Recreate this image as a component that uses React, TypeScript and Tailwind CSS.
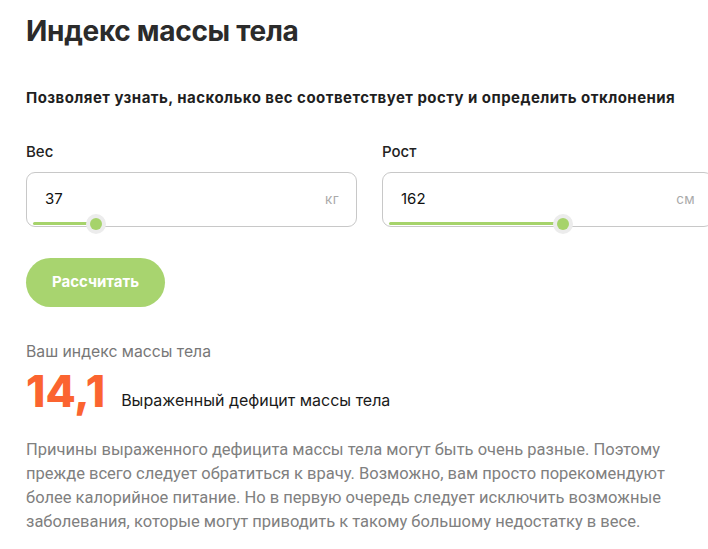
import React from 'react';

const font = { fontFamily: 'Inter, "Noto Sans", sans-serif' };

type FieldProps = { label: string; value: string; unit: string; percent: number };

const Field: React.FC<FieldProps> = ({ label, value, unit, percent }) => (
  <div className="w-[331px] shrink-0">
    <div className="text-[15px] font-medium text-[#222] leading-[20px] mb-[10px]">{label}</div>
    <div className="relative h-[55px] rounded-[9px] border border-[#c8c8c8] flex items-center pl-[18px] pr-[17px]">
      <span className="text-[15px] text-[#111] flex-1 pb-[1px]">{value}</span>
      <span className="text-[13.5px] text-[#aaaaaa] tracking-wide">{unit}</span>
      {/* slider over the bottom edge */}
      <div className="absolute left-[6px] right-[6px] bottom-[1px] h-[3px]">
        <div className="absolute left-0 top-0 h-[3px] bg-[#a6d36b] rounded-full" style={{ width: `${percent}%` }} />
        <div
          className="absolute top-1/2 w-[20px] h-[20px] -ml-[10px] -mt-[10px] rounded-full bg-[#ececec] flex items-center justify-center"
          style={{ left: `${percent}%` }}
        >
          <div className="w-[12px] h-[12px] rounded-full bg-[#a6d36b]" />
        </div>
      </div>
    </div>
  </div>
);

export default function App() {
  return (
    <div className="bg-white min-h-[549px] overflow-hidden pl-[26px]" style={font}>
      <h1 className="text-[28px] font-bold text-[#2b2b2b] leading-[34px] pt-[14px] tracking-[-0.3px]">
        Индекс массы тела
      </h1>
      <p className="mt-[40px] text-[15px] font-bold text-[#1f1f1f] leading-[20px] tracking-[0.45px]">
        Позволяет узнать, насколько вес соответствует росту и определить отклонения
      </p>
      <div className="flex gap-[25px] mt-[34px] w-[800px]">
        <Field label="Вес" value="37" unit="кг" percent={20} />
        <Field label="Рост" value="162" unit="см" percent={55} />
      </div>
      <button className="mt-[31px] h-[49px] w-[139px] rounded-full bg-[#a8d46f] text-white text-[15px] font-bold">
        Рассчитать
      </button>
      <div className="mt-[35px] text-[15.75px] text-[#777] leading-[20px]">Ваш индекс массы тела</div>
      <div className="flex items-end mt-[8px]">
        <span className="text-[44px] font-extrabold text-[#fb6430] leading-[42px]">14,1</span>
        <span className="ml-[16px] text-[16px] text-[#1a1a1a] leading-[20px] mb-[2px]">Выраженный дефицит массы тела</span>
      </div>
      <p
        className="mt-[26px] text-[16.5px] text-[#808080] leading-[24px] w-[655px]"
        style={{ fontFamily: 'Roboto, "Noto Sans", sans-serif' }}
      >
        Причины выраженного дефицита массы тела могут быть очень разные. Поэтому прежде всего следует
        обратиться к врачу. Возможно, вам просто порекомендуют более калорийное питание. Но в первую
        очередь следует исключить возможные заболевания, которые могут приводить к такому большому
        недостатку в весе.
      </p>
    </div>
  );
}
